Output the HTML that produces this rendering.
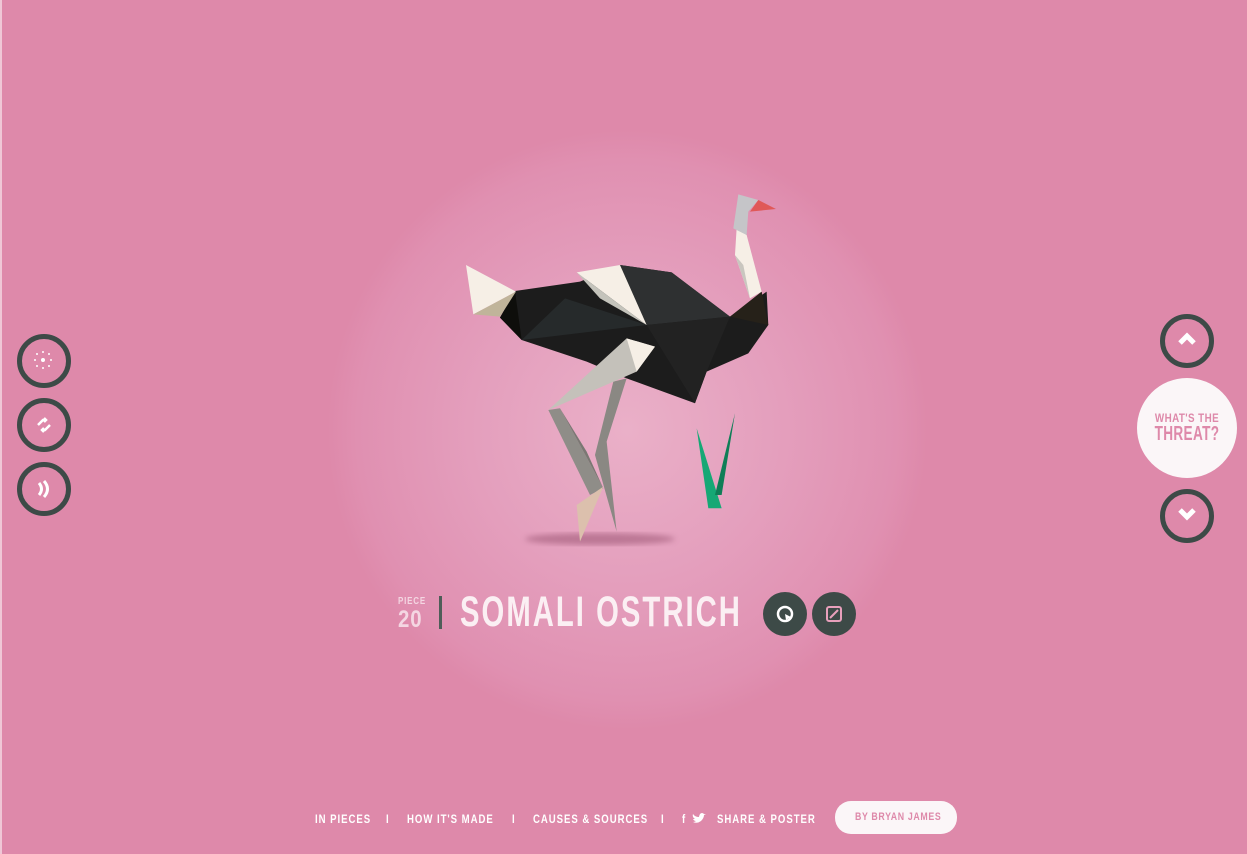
<!DOCTYPE html>
<html><head><meta charset="utf-8"><style>
html,body{margin:0;padding:0;width:1247px;height:854px;overflow:hidden}
body{background:radial-gradient(circle at 627px 430px,#eab0c8 0,#e49fbd 150px,#e090b1 270px,#de89aa 300px,#de89aa 100%);font-family:"Liberation Sans",sans-serif;position:relative}
.ring{position:absolute;width:44px;height:44px;border:5px solid #3d4a47;border-radius:50%;box-sizing:content-box}
.t{position:absolute;color:#fff;font-weight:bold;white-space:nowrap}
.nav{position:absolute;top:812px;font-size:12px;letter-spacing:1.2px;color:#fff;font-weight:bold;white-space:nowrap;transform:scaleX(0.8);transform-origin:left}
</style></head><body>
<div style="position:absolute;left:0;top:0;width:2px;height:854px;background:#efc7d6"></div>
<svg style="position:absolute;left:0;top:0" width="1247" height="854">
<defs><filter id="b"><feGaussianBlur stdDeviation="3"/></filter></defs>
<ellipse cx="600" cy="539" rx="75" ry="6" fill="#a05a78" opacity="0.6" filter="url(#b)"/>
<g transform="translate(460,185) scale(0.3333)">
<polygon points="165,318 360,290 480,240 635,262 810,395 920,320 925,420 865,505 740,560 705,655 500,580 380,530 185,465 120,398" fill="#1c1c1c"/>
<polygon points="480,240 635,262 810,395 560,420" fill="#2e3031"/>
<polygon points="560,420 810,395 740,560 705,655" fill="#222"/>
<polygon points="185,465 315,340 560,420" fill="#262a2b"/>
<polygon points="120,398 165,318 185,465" fill="#0e0e0b"/>
<polygon points="810,395 905,320 925,420" fill="#262119"/>
<polygon points="18,240 168,320 40,388" fill="#f6efe6"/>
<polygon points="40,388 168,320 120,395" fill="#c0b49a"/>
<polygon points="350,262 480,240 560,420" fill="#f6efe6"/>
<polygon points="350,262 560,420 420,340" fill="#c4c3bb"/>
<polygon points="830,130 860,150 905,320 870,340 825,210" fill="#f6efe6"/>
<polygon points="825,210 870,340 850,240" fill="#c9c6bf"/>
<polygon points="820,130 835,28 895,45 865,80 860,150" fill="#c5c5c8"/>
<polygon points="870,80 895,45 948,72" fill="#e05858"/>
<polygon points="460,590 500,580 440,770 470,1040 405,810" fill="#8a8883"/>
<polygon points="265,675 300,670 430,910 390,930" fill="#8f8d88"/>
<polygon points="300,670 430,910 380,800" fill="#7a7873"/>
<polygon points="350,960 430,905 360,1070" fill="#dcc0ad"/>
<polygon points="265,675 500,460 585,485 530,560" fill="#c4c1ba"/>
<polygon points="500,460 585,485 530,560" fill="#f6efe6"/>
<polygon points="710,730 785,970 745,970" fill="#16a875"/>
<polygon points="825,685 785,930 765,930" fill="#0f7e57"/>
</g>
</svg>
<div class="ring" style="left:17px;top:334px"></div>
<div class="t" style="left:33px;top:350px;width:20px;height:20px"><svg width="20" height="20"><circle cx="10" cy="10" r="2" fill="#fff"/><g fill="#fff"><circle cx="10" cy="2" r="1"/><circle cx="10" cy="18" r="1"/><circle cx="2" cy="10" r="1"/><circle cx="18" cy="10" r="1"/><circle cx="4" cy="4" r="1"/><circle cx="16" cy="16" r="1"/><circle cx="16" cy="4" r="1"/><circle cx="4" cy="16" r="1"/></g></svg></div>
<div class="ring" style="left:17px;top:398px"></div>
<svg style="position:absolute;left:34px;top:415px" width="20" height="20"><path d="M4 10 L9 5 L12 5 M10 3 L12 5 L10 7 M16 10 L11 15 L8 15 M10 13 L8 15 L10 17" stroke="#fff" stroke-width="2.5" fill="none"/></svg>
<div class="ring" style="left:17px;top:462px"></div>
<svg style="position:absolute;left:36px;top:478px" width="20" height="22"><path d="M3 5 Q8 11 3 17 M8 3 Q15 11 8 19" stroke="#fff" stroke-width="3" fill="none"/></svg>
<div class="ring" style="left:1160px;top:314px"></div>
<svg style="position:absolute;left:1177px;top:331px" width="20" height="16"><path d="M3 12 L10 5 L17 12" stroke="#fff" stroke-width="5" fill="none"/></svg>
<div style="position:absolute;left:1137px;top:378px;width:100px;height:100px;border-radius:50%;background:#fbf6f8"></div>
<div class="t" style="left:1137px;top:411px;width:100px;text-align:center;color:#de89aa;font-size:12px;letter-spacing:0.5px;transform:scaleX(0.82)">WHAT'S THE</div>
<div class="t" style="left:1137px;top:423px;width:100px;text-align:center;color:#de89aa;font-size:20px;letter-spacing:0.5px;transform:scaleX(0.68)">THREAT?</div>
<div class="ring" style="left:1160px;top:489px"></div>
<svg style="position:absolute;left:1177px;top:506px" width="20" height="16"><path d="M3 4 L10 11 L17 4" stroke="#fff" stroke-width="5" fill="none"/></svg>
<div class="t" style="left:398px;top:596px;font-size:10px;color:#f4d6e2;letter-spacing:1px;transform:scaleX(0.8);transform-origin:left">PIECE</div>
<div class="t" style="left:398px;top:606px;font-size:24px;color:#f4d6e2;letter-spacing:1px;transform:scaleX(0.85);transform-origin:left">20</div>
<div style="position:absolute;left:439px;top:596px;width:3px;height:33px;background:#4e5d58"></div>
<div class="t" style="left:460px;top:588px;font-size:43px;letter-spacing:3px;color:#fbeff3;transform:scaleX(0.68);transform-origin:left">SOMALI OSTRICH</div>
<div style="position:absolute;left:763px;top:592px;width:44px;height:44px;border-radius:50%;background:#3d4a47"></div>
<svg style="position:absolute;left:775px;top:604px" width="20" height="20"><circle cx="10" cy="10" r="7" stroke="#fff" stroke-width="2.5" fill="none"/><path d="M10 10 L16 13 L11 16 Z" fill="#fff"/></svg>
<div style="position:absolute;left:812px;top:592px;width:44px;height:44px;border-radius:50%;background:#3d4a47"></div>
<svg style="position:absolute;left:825px;top:605px" width="18" height="18"><rect x="2" y="2" width="14" height="14" rx="2" stroke="#e8a0bc" stroke-width="2" fill="none"/><path d="M5 13 L13 5" stroke="#e8a0bc" stroke-width="2"/></svg>
<div class="nav" style="left:315px">IN PIECES</div>
<div class="nav" style="left:386px">I</div>
<div class="nav" style="left:407px">HOW IT'S MADE</div>
<div class="nav" style="left:512px">I</div>
<div class="nav" style="left:533px">CAUSES &amp; SOURCES</div>
<div class="nav" style="left:661px">I</div>
<div class="nav" style="left:682px">f</div>
<svg style="position:absolute;left:692px;top:813px" width="14" height="12"><path d="M1 9 Q5 11 9 8 Q12 5 12 2 L14 1 L12 1 Q10 -1 8 1 Q7 3 7 4 Q3 4 1 1 Q0 4 3 6 Q2 6 1 6 Q2 8 4 8 Q3 9 1 9Z" fill="#fff"/></svg>
<div class="nav" style="left:717px">SHARE &amp; POSTER</div>
<div style="position:absolute;left:835px;top:801px;width:122px;height:33px;border-radius:16px;background:#fbf6f8"></div>
<div class="nav" style="left:855px;top:811px;color:#de89aa;font-size:11px;letter-spacing:0.8px">BY BRYAN JAMES</div>
</body></html>
